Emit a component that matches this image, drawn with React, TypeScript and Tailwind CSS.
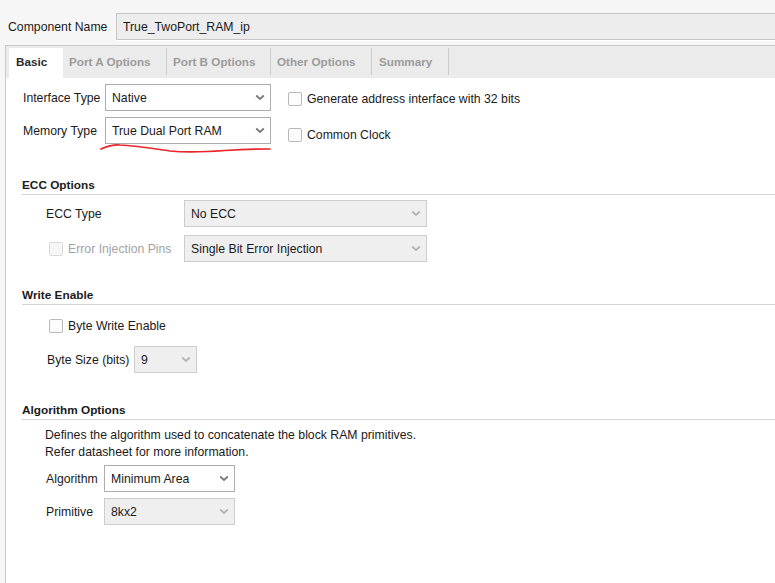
import React from "react";

function Chevron({ disabled }: { disabled?: boolean }) {
  return (
    <svg width="10" height="7" viewBox="0 0 10 7" className="shrink-0">
      <path
        d="M1.2 1.5 L5 5 L8.8 1.5"
        fill="none"
        stroke={disabled ? "#b4b4b4" : "#7a7a7a"}
        strokeWidth="1.8"
      />
    </svg>
  );
}

function Select({
  value,
  w,
  disabled,
}: {
  value: string;
  w: string;
  disabled?: boolean;
}) {
  return (
    <div
      className={
        "h-[27px] flex items-center justify-between pl-[6px] pr-[5px] border " +
        w +
        " " +
        (disabled
          ? "bg-[#efefef] border-[#cdcdcd]"
          : "bg-white border-[#adadad]")
      }
    >
      <span className="text-[12.25px] text-[#1a1a1a] leading-[16px]">{value}</span>
      <Chevron disabled={disabled} />
    </div>
  );
}

function Checkbox({ disabled }: { disabled?: boolean }) {
  return (
    <div
      className={
        "w-[14px] h-[14px] rounded-[2px] border shrink-0 " +
        (disabled
          ? "border-[#d9d9d9] bg-[#f6f6f6]"
          : "border-[#b9b9b9] bg-[#fdfdfd]")
      }
    />
  );
}

function SectionHeader({ title }: { title: string }) {
  return (
    <div className="border-b border-[#d4d4d4] pb-[1px]">
      <div className="text-[11.8px] font-bold leading-[16px] text-[#1a1a1a] pt-[1px]">
        {title}
      </div>
    </div>
  );
}

export default function App() {
  return (
    <div
      className="relative w-[775px] h-[583px] overflow-hidden bg-[#f6f6f6] flex flex-col text-[#1a1a1a]"
      style={{ fontFamily: '"Liberation Sans", Arial, sans-serif' }}
    >
      {/* Top row */}
      <div className="h-[45px] flex items-start pl-[8px] shrink-0">
        <div className="mt-[19px] w-[108px] text-[12.25px] leading-[16px]">
          Component Name
        </div>
        <div className="mt-[13px] flex-1 h-[27px] bg-[#ededed] border-t border-l border-b border-[#c6c6c6] shadow-[0_1px_0_#ffffff] flex items-center pl-[6px]">
          <span className="text-[12.25px] leading-[16px]">True_TwoPort_RAM_ip</span>
        </div>
      </div>

      {/* Panel */}
      <div className="flex-1 ml-[5px] border-l border-t border-[#c9c9c9] bg-white flex flex-col">
        {/* Tabs */}
        <div className="h-[32px] bg-[#ebebeb] flex items-start pt-[2px] pl-[3px] shrink-0">
          <div className="w-[54px] h-[30px] bg-white flex items-center pb-[2px] pl-[7px] text-[11.7px] font-bold text-[#2a2a2a]">
            Basic
          </div>
          <div className="w-[103px] h-[30px] flex items-center pb-[2px] pl-[6px] text-[11.7px] font-bold text-[#9b9b9b]">
            Port A Options
          </div>
          <div className="w-px h-[27px] bg-[#cbcbcb]" />
          <div className="w-[103px] h-[30px] flex items-center pb-[2px] pl-[6px] text-[11.7px] font-bold text-[#9b9b9b]">
            Port B Options
          </div>
          <div className="w-px h-[27px] bg-[#cbcbcb]" />
          <div className="w-[100px] h-[30px] flex items-center pb-[2px] pl-[6px] text-[11.7px] font-bold text-[#9b9b9b]">
            Other Options
          </div>
          <div className="w-px h-[27px] bg-[#cbcbcb]" />
          <div className="w-[76px] h-[30px] flex items-center pb-[2px] pl-[7px] text-[11.7px] font-bold text-[#9b9b9b]">
            Summary
          </div>
          <div className="w-px h-[27px] bg-[#cbcbcb]" />
        </div>

        {/* Body */}
        <div className="flex flex-col pl-[16px] text-[12.25px] leading-[16px]">
          {/* Top rows */}
          <div className="flex">
            <div className="flex flex-col gap-[6px] mt-[6px] pl-[1px]">
              <div className="flex items-center">
                <div className="w-[82px]">Interface Type</div>
                <Select value="Native" w="w-[166px]" />
              </div>
              <div className="flex items-center">
                <div className="w-[82px]">Memory Type</div>
                <Select value="True Dual Port RAM" w="w-[166px]" />
              </div>
            </div>
            <div className="flex flex-col gap-[20px] mt-[13px] ml-[17px]">
              <div className="h-[16px] flex items-center gap-[5px]">
                <Checkbox />
                <span>Generate address interface with 32 bits</span>
              </div>
              <div className="h-[16px] flex items-center gap-[5px]">
                <Checkbox />
                <span>Common Clock</span>
              </div>
            </div>
          </div>

          {/* ECC Options */}
          <div className="mt-[32px]">
            <SectionHeader title="ECC Options" />
          </div>
          <div className="flex flex-col gap-[8px] mt-[5px] pl-[24px]">
            <div className="flex items-center">
              <div className="w-[138px]">ECC Type</div>
              <Select value="No ECC" w="w-[243px]" disabled />
            </div>
            <div className="flex items-center">
              <div className="w-[138px] flex items-center gap-[5px] pl-[3px]">
                <Checkbox disabled />
                <span className="text-[#a3a3a3]">Error Injection Pins</span>
              </div>
              <Select value="Single Bit Error Injection" w="w-[243px]" disabled />
            </div>
          </div>

          {/* Write Enable */}
          <div className="mt-[24px]">
            <SectionHeader title="Write Enable" />
          </div>
          <div className="mt-[13px] pl-[27px] h-[16px] flex items-center gap-[5px]">
            <Checkbox />
            <span>Byte Write Enable</span>
          </div>
          <div className="mt-[12px] pl-[25px] flex items-center">
            <div className="w-[87px]">Byte Size (bits)</div>
            <Select value="9" w="w-[63px]" disabled />
          </div>

          {/* Algorithm Options */}
          <div className="mt-[28px]">
            <SectionHeader title="Algorithm Options" />
          </div>
          <div className="mt-[7px] pl-[23px] leading-[17px]">
            <div>Defines the algorithm used to concatenate the block RAM primitives.</div>
            <div>Refer datasheet for more information.</div>
          </div>
          <div className="flex flex-col gap-[6px] mt-[4px] pl-[24px]">
            <div className="flex items-center">
              <div className="w-[58px]">Algorithm</div>
              <Select value="Minimum Area" w="w-[131px]" />
            </div>
            <div className="flex items-center">
              <div className="w-[58px]">Primitive</div>
              <Select value="8kx2" w="w-[131px]" disabled />
            </div>
          </div>
        </div>
      </div>

      {/* Red hand-drawn underline annotation */}
      <svg
        className="absolute left-0 top-0 pointer-events-none"
        width="775"
        height="583"
      >
        <path
          d="M101 149 C 108 146, 114 144.5, 120 145 C 135 145.5, 150 148, 170 151 C 185 152.5, 205 152, 225 150.5 C 240 149.5, 255 149, 270 149"
          fill="none"
          stroke="#e8262a"
          strokeWidth="1.7"
          strokeLinecap="round"
        />
      </svg>
    </div>
  );
}
